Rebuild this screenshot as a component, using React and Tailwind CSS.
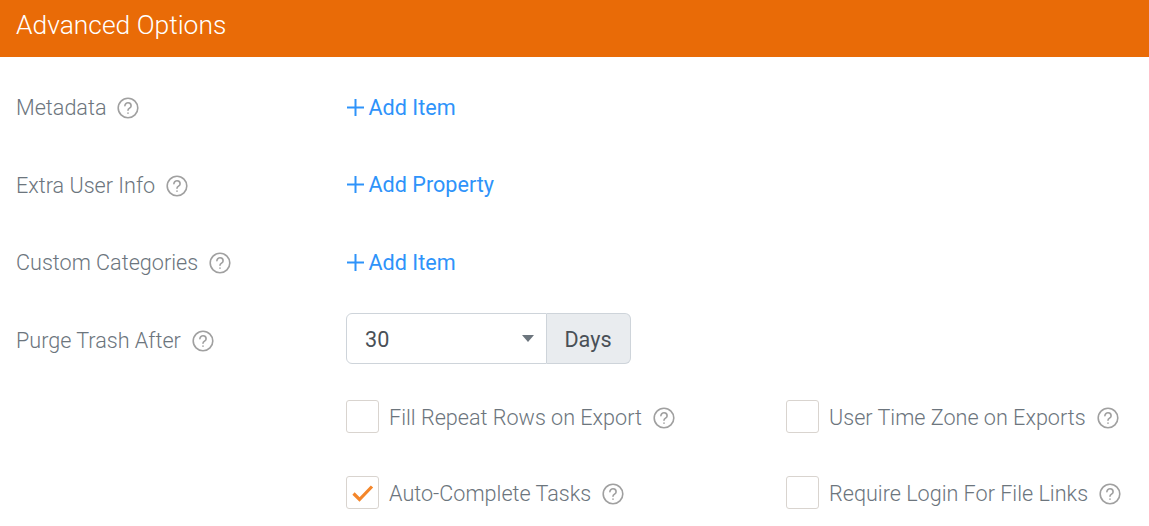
import React from "react";

const Help = () => (
  <svg width="22" height="22" viewBox="0 0 22 22" fill="none" stroke="#a0a0a0" strokeWidth="1.6" strokeLinecap="round" strokeLinejoin="round" className="shrink-0">
    <circle cx="11" cy="11" r="9.8" />
    <path d="M7.9 8.8a3.1 3.1 0 0 1 6.2.2c0 2-3.1 2.2-3.1 4.2" />
    <path d="M11 16.1v.1" />
  </svg>
);

const Label = ({ children, className = "" }) => (
  <div className={"flex items-center gap-[11px] " + className}>
    <span>{children}</span>
    <Help />
  </div>
);

const Add = ({ children }) => (
  <div className="flex items-center gap-[5px] pb-[0.3px] text-[#2e93fa] font-normal">
    <svg width="17" height="17" viewBox="0 0 17 17" stroke="currentColor" strokeWidth="2" fill="none" className="ml-[0.5px] -mt-[2px]"><path d="M8.5 0v17M0 8.5h17" /></svg>
    <span>{children}</span>
  </div>
);

const Row = ({ label, children }) => (
  <div className="flex items-center h-[77.5px]">
    <div className="w-[330px] shrink-0"><Label>{label}</Label></div>
    {children}
  </div>
);

const Check = ({ checked, label, w }) => (
  <div className={"flex items-center gap-[10px] " + w}>
    <div className="w-[33px] h-[33px] bg-white border border-[#d9d4cf] rounded-[3px] flex items-center justify-center shrink-0">
      {checked && (
        <svg width="22" height="18" viewBox="0 0 22 18" fill="none" stroke="#f4862a" strokeWidth="3.2"><path d="M1.5 9.5l6 6L20 2.5" /></svg>
      )}
    </div>
    <Label className="translate-y-[2px]">{label}</Label>
  </div>
);

export default function App() {
  return (
    <div className="w-[1149px] h-[526px] overflow-hidden bg-white text-[21.6px] font-light text-[#6c757d] font-['Roboto',sans-serif]">
      <div className="h-[57px] bg-[#e96b07] text-white text-[26.4px] font-light flex items-center px-4 pb-[6px]">Advanced Options</div>
      <div className="pl-4 pt-[12.5px]">
        <Row label="Metadata"><Add>Add Item</Add></Row>
        <Row label="Extra User Info"><Add>Add Property</Add></Row>
        <Row label="Custom Categories"><Add>Add Item</Add></Row>
        <Row label="Purge Trash After">
          <div className="flex h-[51px] w-[285px] -mt-[4px] text-[#495057] font-normal">
            <div className="w-[201px] border border-[#ced4da] rounded-l-[6px] flex items-center justify-between pl-[18px] pr-[12px]">
              <span className="pt-[2px]">30</span>
              <span className="w-0 h-0 border-x-[6px] border-x-transparent border-t-[7px] border-t-[#6c757d]" />
            </div>
            <div className="flex-1 border border-l-0 border-[#ced4da] bg-[#e9ecef] rounded-r-[6px] flex items-center justify-center pr-[1px] pt-[2px]">Days</div>
          </div>
        </Row>
        <div className="pl-[330px] flex flex-col gap-[43px] pt-[20.5px]">
          <div className="flex">
            <Check label="Fill Repeat Rows on Export" w="w-[440px]" />
            <Check label="User Time Zone on Exports" w="" />
          </div>
          <div className="flex">
            <Check checked label="Auto-Complete Tasks" w="w-[440px]" />
            <Check label="Require Login For File Links" w="" />
          </div>
        </div>
      </div>
    </div>
  );
}
